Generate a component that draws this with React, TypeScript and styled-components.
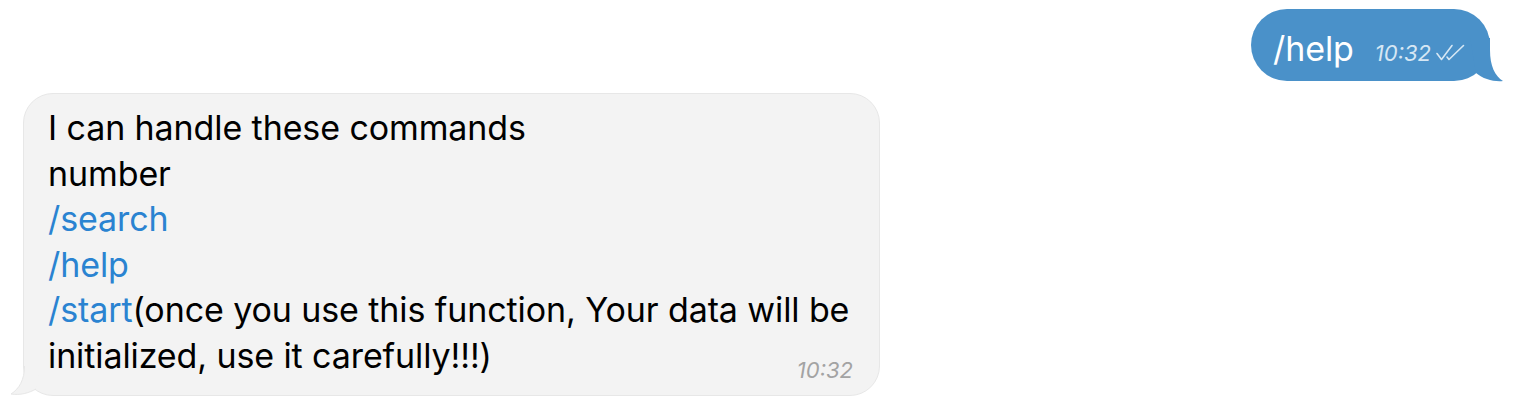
import styled, { createGlobalStyle } from "styled-components";

const GlobalStyle = createGlobalStyle`
  html, body {
    margin: 0;
    padding: 0;
    background: #ffffff;
  }
  body {
    font-family: Inter, "Noto Sans", "Liberation Sans", sans-serif;
    -webkit-font-smoothing: antialiased;
  }
`;

const Chat = styled.div`
  display: flex;
  flex-direction: column;
  padding-top: 9px;
  width: 1520px;
`;

const Row = styled.div<{ $out?: boolean }>`
  display: flex;
  justify-content: ${(p) => (p.$out ? "flex-end" : "flex-start")};
  padding: ${(p) => (p.$out ? "0 30px 0 0" : "12px 0 0 23px")};
`;

const OutBubble = styled.div`
  position: relative;
  display: flex;
  align-items: baseline;
  box-sizing: border-box;
  height: 72px;
  padding: 17px 25px 0 22px;
  background: #4a91c9;
  border-radius: 36px;
  color: #ffffff;
`;

const InBubble = styled.div`
  position: relative;
  display: flex;
  flex-direction: column;
  box-sizing: border-box;
  width: 857px;
  padding: 11px 26px 13px 24px;
  background: #f3f3f3;
  border: 1px solid #e7e7e7;
  border-radius: 30px;
  color: #000000;
`;

const Text = styled.div`
  font-size: 34px;
  line-height: 45.5px;
  white-space: nowrap;
  letter-spacing: -0.1px;
`;

const Command = styled.span`
  color: #2a83d1;
`;

const Meta = styled.div<{ $out?: boolean }>`
  display: flex;
  align-items: baseline;
  gap: 4px;
  align-self: ${(p) => (p.$out ? "baseline" : "flex-end")};
  margin: ${(p) => (p.$out ? "0 0 0 21px" : "-20px 0 0 0")};
  font-size: 22px;
  line-height: 24px;
  font-style: italic;
  color: ${(p) => (p.$out ? "#d6e7f4" : "#a3a3a3")};
`;

const Tail = styled.svg<{ $out?: boolean }>`
  position: absolute;
  bottom: -1px;
  ${(p) => (p.$out ? "right: -14px;" : "left: -14px;")}
  width: 34px;
  height: 44px;
  overflow: visible;
`;

const Checks = () => (
  <svg width="30" height="17" viewBox="0 0 30 17" fill="none">
    <path
      d="M2 9.5 L6.5 15.5 L17 1.5"
      stroke="#d6e7f4"
      strokeWidth="1.6"
      strokeLinecap="round"
      strokeLinejoin="round"
    />
    <path
      d="M12 13 L14 15.5 L28.5 1.5"
      stroke="#d6e7f4"
      strokeWidth="1.6"
      strokeLinecap="round"
      strokeLinejoin="round"
    />
  </svg>
);

export default function App() {
  return (
    <>
      <GlobalStyle />
      <Chat>
        <Row $out>
          <OutBubble>
            <Text>/help</Text>
            <Meta $out>
              <span>10:32</span>
              <Checks />
            </Meta>
            <Tail $out viewBox="0 0 34 44">
              <path
                d="M20 0 L20 12 C20 28 25 38 33 43 C24 44 13 41 6 35 L0 0 Z"
                fill="#4a91c9"
              />
            </Tail>
          </OutBubble>
        </Row>
        <Row>
          <InBubble>
            <Text>
              I can handle these commands
              <br />
              number
              <br />
              <Command>/search</Command>
              <br />
              <Command>/help</Command>
              <br />
              <Command>/start</Command>(once you use this function, Your data
              will be
              <br />
              initialized, use it carefully!!!)
            </Text>
            <Meta>
              <span>10:32</span>
            </Meta>
            <Tail viewBox="0 0 34 44">
              <path
                d="M14.5 0 L14.5 14 C14.5 28 9 37 1 42 C10 43.5 19 41 26 37 L34 0 Z"
                fill="#f3f3f3"
              />
              <path
                d="M14.5 14 C14.5 28 9 37 1 42 C10 43.5 19 41 26 37"
                fill="none"
                stroke="#e7e7e7"
                strokeWidth="1"
              />
            </Tail>
          </InBubble>
        </Row>
      </Chat>
    </>
  );
}
